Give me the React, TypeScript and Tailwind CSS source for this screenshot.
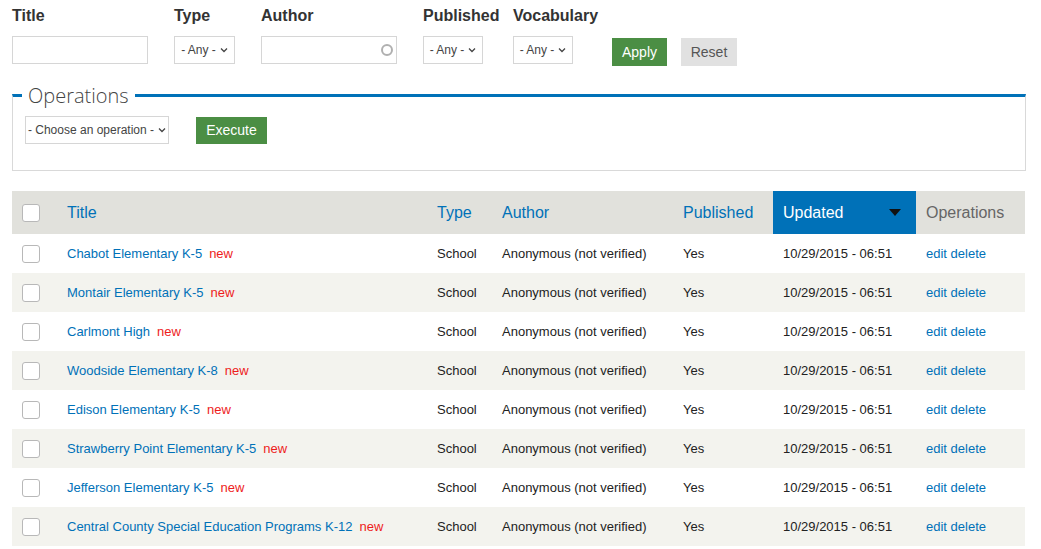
import React from "react";

const rows = [
  "Chabot Elementary K-5",
  "Montair Elementary K-5",
  "Carlmont High",
  "Woodside Elementary K-8",
  "Edison Elementary K-5",
  "Strawberry Point Elementary K-5",
  "Jefferson Elementary K-5",
  "Central County Special Education Programs K-12",
];

function Chevron() {
  return (
    <svg width="8" height="6" viewBox="0 0 8 6" className="ml-1">
      <path d="M1 1.5 L4 4.5 L7 1.5" fill="none" stroke="#444" strokeWidth="1.3" />
    </svg>
  );
}

function Select({ label, w }: { label: string; w: string }) {
  return (
    <div className={`flex h-[28px] items-center justify-center border border-[#d6d6d6] bg-white text-[12px] text-[#444] ${w}`}>
      <span>{label}</span>
      <Chevron />
    </div>
  );
}

function Box() {
  return <div className="h-[18px] w-[18px] rounded-[3px] border border-[#b8b8b8] bg-white" />;
}

export default function App() {
  return (
    <div className="h-[549px] w-[1041px] overflow-hidden bg-white px-[12px] font-['Liberation_Sans',Arial,sans-serif] text-[#222]">
      {/* exposed filters */}
      <div className="flex pt-[6px]">
        <div className="w-[162px]">
          <div className="text-[16px] font-bold leading-[20px] text-[#333]">Title</div>
          <div className="mt-[10px] h-[28px] w-[136px] border border-[#d6d6d6]" />
        </div>
        <div className="w-[87px]">
          <div className="text-[16px] font-bold leading-[20px] text-[#333]">Type</div>
          <div className="mt-[10px]"><Select label="- Any -" w="w-[61px]" /></div>
        </div>
        <div className="w-[162px]">
          <div className="text-[16px] font-bold leading-[20px] text-[#333]">Author</div>
          <div className="relative mt-[10px] h-[28px] w-[136px] border border-[#d6d6d6]">
            <div className="absolute right-[3px] top-[7px] h-[12px] w-[12px] rounded-full border-2 border-[#b0b0b0]" />
          </div>
        </div>
        <div className="w-[90px]">
          <div className="text-[16px] font-bold leading-[20px] text-[#333]">Published</div>
          <div className="mt-[10px]"><Select label="- Any -" w="w-[60px]" /></div>
        </div>
        <div className="w-[99px]">
          <div className="text-[16px] font-bold leading-[20px] text-[#333]">Vocabulary</div>
          <div className="mt-[10px]"><Select label="- Any -" w="w-[60px]" /></div>
        </div>
        <div className="flex items-start gap-[14px] pt-[32px]">
          <button className="h-[28px] w-[55px] bg-[#4b8e44] text-[14px] text-white">Apply</button>
          <button className="h-[28px] w-[56px] bg-[#e1e1e1] text-[14px] text-[#555]">Reset</button>
        </div>
      </div>

      {/* operations fieldset */}
      <div className="relative mt-[28px] h-[77px] w-[1014px] border border-t-[3px] border-[#d9d9d9] border-t-[#0071b8]">
        <div className="absolute -top-[13px] left-[9px] bg-white px-[6px] font-['Open_Sans',sans-serif] text-[20px] font-light leading-[24px] text-[#444]">
          Operations
        </div>
        <div className="flex items-center gap-[27px] pl-[12px] pt-[19px]">
          <Select label="- Choose an operation -" w="w-[144px] text-[11px]" />
          <button className="h-[27px] w-[71px] bg-[#4b8e44] text-[14px] text-white">Execute</button>
        </div>
      </div>

      {/* results table */}
      <table className="mt-[20px] w-[1013px] table-fixed border-collapse text-[13px]">
        <colgroup>
          <col className="w-[45px]" />
          <col className="w-[370px]" />
          <col className="w-[65px]" />
          <col className="w-[181px]" />
          <col className="w-[100px]" />
          <col className="w-[143px]" />
          <col className="w-[109px]" />
        </colgroup>
        <thead>
          <tr className="h-[43px] bg-[#e1e1dc] text-left text-[16px] font-normal text-[#0071b8]">
            <th className="pl-[10px] font-normal"><Box /></th>
            <th className="pl-[10px] font-normal">Title</th>
            <th className="pl-[10px] font-normal">Type</th>
            <th className="pl-[10px] font-normal">Author</th>
            <th className="pl-[10px] font-normal">Published</th>
            <th className="bg-[#0071b8] pl-[10px] font-normal text-white">
              <div className="flex items-center justify-between pr-[15px]">
                <span>Updated</span>
                <svg width="12" height="7" viewBox="0 0 12 7"><path d="M0 0 H12 L6 7 Z" fill="#111" /></svg>
              </div>
            </th>
            <th className="pl-[10px] font-normal text-[#666]">Operations</th>
          </tr>
        </thead>
        <tbody>
          {rows.map((r, i) => (
            <tr key={r} className={`h-[39px] ${i % 2 === 1 ? "bg-[#f3f3ee]" : "bg-white"}`}>
              <td className="pl-[10px]"><Box /></td>
              <td className="pl-[10px]">
                <span className="text-[#0071b8]">{r}</span>
                <span className="ml-[7px] text-[#ee1c1c]">new</span>
              </td>
              <td className="pl-[10px]">School</td>
              <td className="pl-[10px]">Anonymous (not verified)</td>
              <td className="pl-[10px]">Yes</td>
              <td className="pl-[10px]">10/29/2015 - 06:51</td>
              <td className="pl-[10px] text-[#0071b8]">edit delete</td>
            </tr>
          ))}
        </tbody>
      </table>
    </div>
  );
}
